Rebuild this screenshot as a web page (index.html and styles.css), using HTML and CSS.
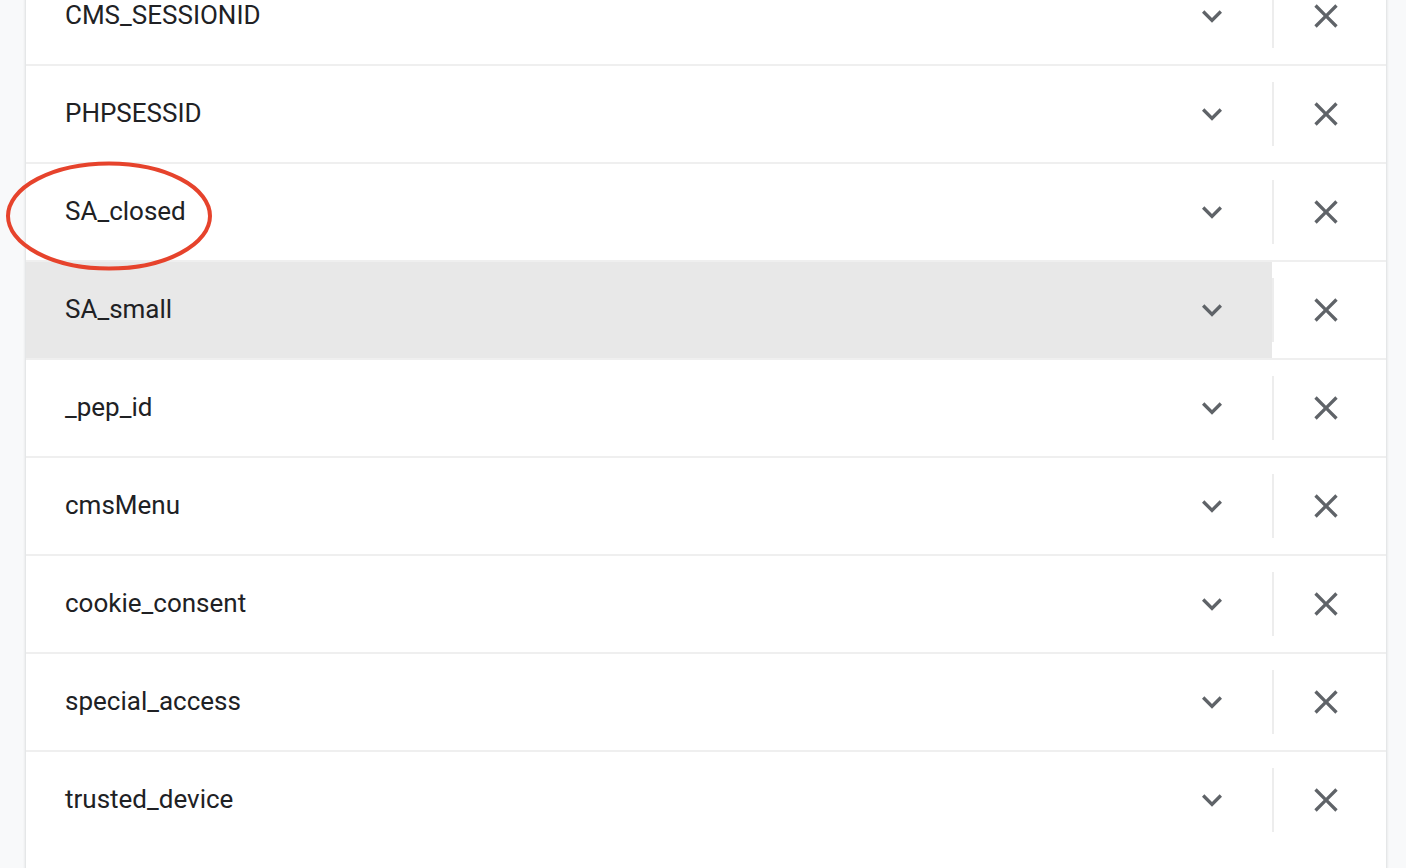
FILE: index.html
```html
<!DOCTYPE html>
<html lang="en">

<head>
  <meta charset="UTF-8" />
  <meta name="viewport" content="width=device-width, initial-scale=1.0" />
  <title>Cookies</title>
  <link rel="stylesheet" href="styles.css">
</head>

<body>
  <div class="card">
    <div class="row">
      <div class="main"><span class="name">CMS_SESSIONID</span>
        <button class="expand"><svg viewBox="0 0 24 24"><path d="M16.59 8.59L12 13.17 7.41 8.59 6 10l6 6 6-6z"/></svg></button></div>
      <div class="sep"></div>
      <button class="remove"><svg viewBox="0 0 24 24"><path d="M19 6.41L17.59 5 12 10.59 6.41 5 5 6.41 10.59 12 5 17.59 6.41 19 12 13.41 17.59 19 19 17.59 13.41 12z"/></svg></button>
    </div>
    <div class="row">
      <div class="main"><span class="name">PHPSESSID</span>
        <button class="expand"><svg viewBox="0 0 24 24"><path d="M16.59 8.59L12 13.17 7.41 8.59 6 10l6 6 6-6z"/></svg></button></div>
      <div class="sep"></div>
      <button class="remove"><svg viewBox="0 0 24 24"><path d="M19 6.41L17.59 5 12 10.59 6.41 5 5 6.41 10.59 12 5 17.59 6.41 19 12 13.41 17.59 19 19 17.59 13.41 12z"/></svg></button>
    </div>
    <div class="row">
      <div class="main"><span class="name">SA_closed</span>
        <button class="expand"><svg viewBox="0 0 24 24"><path d="M16.59 8.59L12 13.17 7.41 8.59 6 10l6 6 6-6z"/></svg></button></div>
      <div class="sep"></div>
      <button class="remove"><svg viewBox="0 0 24 24"><path d="M19 6.41L17.59 5 12 10.59 6.41 5 5 6.41 10.59 12 5 17.59 6.41 19 12 13.41 17.59 19 19 17.59 13.41 12z"/></svg></button>
    </div>
    <div class="row hover">
      <div class="main"><span class="name">SA_small</span>
        <button class="expand"><svg viewBox="0 0 24 24"><path d="M16.59 8.59L12 13.17 7.41 8.59 6 10l6 6 6-6z"/></svg></button></div>
      <div class="sep"></div>
      <button class="remove"><svg viewBox="0 0 24 24"><path d="M19 6.41L17.59 5 12 10.59 6.41 5 5 6.41 10.59 12 5 17.59 6.41 19 12 13.41 17.59 19 19 17.59 13.41 12z"/></svg></button>
    </div>
    <div class="row">
      <div class="main"><span class="name">_pep_id</span>
        <button class="expand"><svg viewBox="0 0 24 24"><path d="M16.59 8.59L12 13.17 7.41 8.59 6 10l6 6 6-6z"/></svg></button></div>
      <div class="sep"></div>
      <button class="remove"><svg viewBox="0 0 24 24"><path d="M19 6.41L17.59 5 12 10.59 6.41 5 5 6.41 10.59 12 5 17.59 6.41 19 12 13.41 17.59 19 19 17.59 13.41 12z"/></svg></button>
    </div>
    <div class="row">
      <div class="main"><span class="name">cmsMenu</span>
        <button class="expand"><svg viewBox="0 0 24 24"><path d="M16.59 8.59L12 13.17 7.41 8.59 6 10l6 6 6-6z"/></svg></button></div>
      <div class="sep"></div>
      <button class="remove"><svg viewBox="0 0 24 24"><path d="M19 6.41L17.59 5 12 10.59 6.41 5 5 6.41 10.59 12 5 17.59 6.41 19 12 13.41 17.59 19 19 17.59 13.41 12z"/></svg></button>
    </div>
    <div class="row">
      <div class="main"><span class="name">cookie_consent</span>
        <button class="expand"><svg viewBox="0 0 24 24"><path d="M16.59 8.59L12 13.17 7.41 8.59 6 10l6 6 6-6z"/></svg></button></div>
      <div class="sep"></div>
      <button class="remove"><svg viewBox="0 0 24 24"><path d="M19 6.41L17.59 5 12 10.59 6.41 5 5 6.41 10.59 12 5 17.59 6.41 19 12 13.41 17.59 19 19 17.59 13.41 12z"/></svg></button>
    </div>
    <div class="row">
      <div class="main"><span class="name">special_access</span>
        <button class="expand"><svg viewBox="0 0 24 24"><path d="M16.59 8.59L12 13.17 7.41 8.59 6 10l6 6 6-6z"/></svg></button></div>
      <div class="sep"></div>
      <button class="remove"><svg viewBox="0 0 24 24"><path d="M19 6.41L17.59 5 12 10.59 6.41 5 5 6.41 10.59 12 5 17.59 6.41 19 12 13.41 17.59 19 19 17.59 13.41 12z"/></svg></button>
    </div>
    <div class="row">
      <div class="main"><span class="name">trusted_device</span>
        <button class="expand"><svg viewBox="0 0 24 24"><path d="M16.59 8.59L12 13.17 7.41 8.59 6 10l6 6 6-6z"/></svg></button></div>
      <div class="sep"></div>
      <button class="remove"><svg viewBox="0 0 24 24"><path d="M19 6.41L17.59 5 12 10.59 6.41 5 5 6.41 10.59 12 5 17.59 6.41 19 12 13.41 17.59 19 19 17.59 13.41 12z"/></svg></button>
    </div>
  </div>

  <!-- red mark drawn over the screenshot -->
  <svg class="mark" viewBox="0 0 206 110"><ellipse cx="103" cy="55" rx="101" ry="52.5"/></svg>
</body>

</html>
```

FILE: styles.css
```css
* {
  margin: 0;
  padding: 0;
  box-sizing: border-box;
}

body {
  background: #f8f9fa;
  font-family: Roboto, "Liberation Sans", Arial, sans-serif;
  overflow: hidden;
}

.card {
  width: 1360px;
  margin: -32px 0 0 26px;
  padding-bottom: 40px;
  background: #fff;
  box-shadow: 0 0 3px rgba(60, 64, 67, .25);
}

.row {
  display: flex;
  align-items: center;
  height: 96px;
}

.row + .row {
  height: 98px;
  border-top: 2px solid #efefef;
}

.main {
  flex: 1;
  height: 100%;
  display: flex;
  align-items: center;
  padding: 0 20px 2px 39px;
}

.row.hover .main {
  background: #e8e8e8;
}

.name {
  flex: 1;
  font-size: 26px;
  color: #202124;
}

button {
  border: none;
  background: none;
  display: flex;
  align-items: center;
  justify-content: center;
}

.expand {
  width: 80px;
  height: 80px;
  margin-top: 2px;
}

.remove {
  width: 112px;
  height: 80px;
  padding-right: 8px;
}

button svg {
  width: 40px;
  height: 40px;
  fill: #5f6368;
}

.sep {
  width: 2px;
  height: 64px;
  background: #ededed;
}

.mark {
  position: absolute;
  left: 6px;
  top: 161px;
  width: 206px;
  height: 110px;
  overflow: visible;
}

.mark ellipse {
  fill: none;
  stroke: #e6432c;
  stroke-width: 4;
}
```
